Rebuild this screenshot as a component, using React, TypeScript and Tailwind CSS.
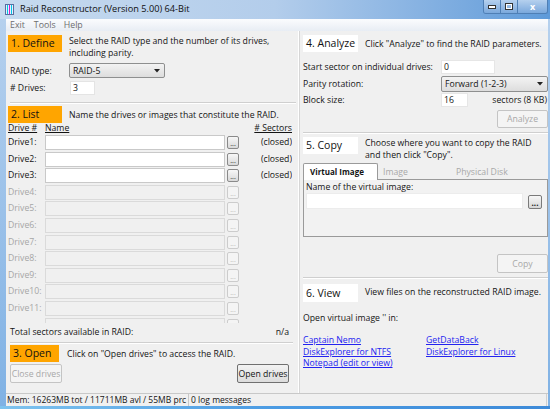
import React from "react";

const FONT = { fontFamily: '"Open Sans", "Noto Sans", "Liberation Sans", sans-serif' };

function DotBtn({ enabled, label = "..." }: { enabled: boolean; label?: string }) {
  return (
    <div
      className={
        enabled
          ? "w-[12px] h-[13px] shrink-0 rounded-[2px] border border-[#8a8a8a] bg-gradient-to-b from-[#f7f7f7] to-[#d9d9d9] flex items-end justify-center text-[7px] leading-[9px] text-[#222]"
          : "w-[12px] h-[13px] shrink-0 rounded-[2px] border border-[#cccccc] bg-[#f4f4f4] flex items-end justify-center text-[7px] leading-[9px] text-[#b4b4b4]"
      }
    >
      {label}
    </div>
  );
}

function Arrow() {
  return (
    <svg width="6" height="4" viewBox="0 0 6 4" className="ml-auto shrink-0">
      <path d="M0 0 L6 0 L3 3.5 Z" fill="#222" />
    </svg>
  );
}

function Sep({ className = "" }: { className?: string }) {
  return (
    <div className={"h-[2px] shrink-0 flex flex-col " + className}>
      <div className="h-[1px] bg-[#cfcfcf]" />
      <div className="h-[1px] bg-white" />
    </div>
  );
}

const drives = Array.from({ length: 12 }, (_, i) => i + 1);

export default function App() {
  return (
    <div
      className="w-[550px] h-[409px] overflow-hidden flex flex-col bg-gradient-to-b from-[#b8d2ee] to-[#7fb1e4] text-[#141414]"
      style={FONT}
    >
      {/* Title bar */}
      <div className="h-[19px] shrink-0 flex items-start bg-gradient-to-r from-[#c6daef] via-[#b3cdeb] to-[#5e9ad9]">
        <div className="mt-[4px] ml-[5px] w-[9px] h-[11px] border border-[#5a6fa0] bg-[#e8f0ff] flex gap-[1px] px-[1px]">
          <div className="w-[1px] bg-[#00c8e8]" />
          <div className="w-[2px] bg-[#d020c8]" />
          <div className="w-[1px] bg-[#00c8e8]" />
        </div>
        <span className="ml-[6px] mt-[3px] text-[9.2px] leading-[12px] text-[#101010] whitespace-nowrap">
          Raid Reconstructor (Version 5.00) 64-Bit
        </span>
        <div className="ml-auto mr-[2px] flex h-[14px] rounded-b-[3px] border border-t-0 border-[#4f7fb5] overflow-hidden">
          <div className="w-[17px] bg-gradient-to-b from-[#b5d0ee] to-[#7aa8dc] border-r border-[#4f7fb5] flex items-end justify-center pb-[4px]">
            <div className="w-[6px] h-[2px] bg-white border border-[#333] box-content" />
          </div>
          <div className="w-[17px] bg-gradient-to-b from-[#b5d0ee] to-[#7aa8dc] border-r border-[#4f7fb5] flex items-center justify-center">
            <div className="w-[6px] h-[5px] border-[1.5px] border-white outline outline-1 outline-[#333]" />
          </div>
          <div className="w-[29px] bg-gradient-to-b from-[#b5d0ee] to-[#7aa8dc] flex items-center justify-center text-white text-[9px] font-bold leading-[10px]">
            x
          </div>
        </div>
      </div>

      {/* Client */}
      <div className="flex-1 ml-[6px] mr-[2px] flex flex-col bg-[#f0f0f0] min-h-0">
        {/* Menu */}
        <div className="h-[12px] shrink-0 flex items-center bg-gradient-to-b from-[#fbfcfe] to-[#e8edf4] text-[8.8px] leading-[12px] text-[#6e6e6e]">
          <span className="ml-[4px]">Exit</span>
          <span className="ml-[9px]">Tools</span>
          <span className="ml-[8px]">Help</span>
        </div>

        {/* Content */}
        <div className="flex-1 flex min-h-0 text-[8.7px] leading-[12px]">
          {/* Left panel */}
          <div className="w-[292px] shrink-0 flex flex-col pl-[2px] pr-[6px]">
            <div className="flex mt-[4px] h-[26px] shrink-0">
              <div className="w-[54px] h-[17px] shrink-0 bg-[#ffa500] text-[10.5px] leading-[17px] pl-[3px] text-[#111]">1. Define</div>
              <div className="ml-[7px] leading-[12px] whitespace-nowrap">
                Select the RAID type and the number of its drives,
                <br />
                including parity.
              </div>
            </div>
            <div className="flex items-center mt-[2px] h-[15px] shrink-0">
              <span className="w-[61px] pl-[2px]">RAID type:</span>
              <div className="w-[96px] h-[15px] border border-[#8e8f8f] rounded-[2px] bg-gradient-to-b from-[#f3f3f3] to-[#dddddd] flex items-center pl-[3px] pr-[4px]">
                <span>RAID-5</span>
                <Arrow />
              </div>
            </div>
            <div className="flex items-center mt-[3px] h-[14px] shrink-0">
              <span className="w-[62px] pl-[2px]">#&nbsp;Drives:</span>
              <div className="w-[25px] h-[14px] bg-white border border-[#e4e4e4] pl-[2px] leading-[12px]">3</div>
            </div>
            <Sep className="mt-[7px] ml-[2px] mr-[-4px]" />
            <div className="flex items-center mt-[2px] h-[17px] shrink-0">
              <div className="w-[54px] h-[17px] shrink-0 bg-[#ffa500] text-[10.5px] leading-[17px] pl-[3px] text-[#111]">2. List</div>
              <div className="ml-[7px] whitespace-nowrap">Name the drives or images that constitute the RAID.</div>
            </div>
            <div className="flex h-[11px] leading-[11px] shrink-0">
              <span className="w-[37px] underline">Drive #</span>
              <span className="underline">Name</span>
              <span className="ml-auto underline">#&nbsp;Sectors</span>
            </div>
            <div className="mt-[1px] h-[188px] overflow-hidden shrink-0">
              {drives.map((d) => {
                const en = d <= 3;
                return (
                  <div key={d} className="flex items-start h-[16.6px]">
                    <span className={en ? "w-[37px] leading-[15px] text-[#141414]" : "w-[37px] leading-[15px] text-[#a6a6a6]"}>
                      {d < 12 ? `Drive${d}:` : ""}
                    </span>
                    <div className={en ? "w-[180px] h-[15px] bg-white border border-[#c9c9c9]" : "w-[180px] h-[15px] bg-[#f0f0f0] border border-[#dadada]"} />
                    <div className="ml-[2px] mt-[1px]">
                      <DotBtn enabled={en} label={d < 12 ? "..." : ""} />
                    </div>
                    <span className="ml-auto leading-[15px]">{en ? "(closed)" : ""}</span>
                  </div>
                );
              })}
            </div>
            <div className="flex items-center mt-[3px] h-[12px] shrink-0 pl-[2px] pr-[3px]">
              <span>Total sectors available in RAID:</span>
              <span className="ml-auto">n/a</span>
            </div>
            <Sep className="mt-[4px] ml-[2px] mr-[-1px]" />
            <div className="flex items-center mt-[1px] h-[17px] shrink-0 pl-[2px]">
              <div className="w-[49px] h-[17px] shrink-0 bg-[#ffa500] text-[10.5px] leading-[17px] pl-[3px] text-[#111]">3. Open</div>
              <div className="ml-[8px] whitespace-nowrap">Click on "Open drives" to access the RAID.</div>
            </div>
            <div className="flex mt-[2px] h-[19px] shrink-0 pl-[2px] pr-[3px]">
              <div className="w-[52px] h-[19px] border border-[#c4c4c4] rounded-[2px] bg-[#f4f4f4] text-[#a8a8a8] flex items-center justify-center whitespace-nowrap">Close drives</div>
              <div className="ml-auto w-[52px] h-[19px] border border-[#707070] rounded-[2px] bg-gradient-to-b from-[#f3f3f3] to-[#dcdcdc] flex items-center justify-center whitespace-nowrap">Open drives</div>
            </div>
          </div>

          {/* Splitter */}
          <div className="w-[2px] shrink-0 flex">
            <div className="w-[1px] bg-white" />
            <div className="w-[1px] bg-[#d6d6d6]" />
          </div>

          {/* Right panel */}
          <div className="flex-1 flex flex-col pl-[3px] min-w-0">
            <div className="flex items-center mt-[4px] h-[17px] shrink-0">
              <div className="w-[55px] h-[17px] shrink-0 bg-white text-[10.5px] leading-[17px] pl-[3px] text-[#111]">4. Analyze</div>
              <div className="ml-[7px] whitespace-nowrap">Click "Analyze" to find the RAID parameters.</div>
            </div>
            <div className="flex items-center mt-[8px] h-[14px] shrink-0">
              <span className="w-[138px] whitespace-nowrap">Start sector on individual drives:</span>
              <div className="w-[54px] h-[14px] bg-white border border-[#e6e6e6] pl-[2px] leading-[12px]">0</div>
            </div>
            <div className="flex items-center mt-[2px] h-[16px] shrink-0">
              <span className="w-[138px]">Parity rotation:</span>
              <div className="w-[107px] h-[16px] border border-[#8e8f8f] rounded-[2px] bg-gradient-to-b from-[#f3f3f3] to-[#dddddd] flex items-center pl-[3px] pr-[4px]">
                <span>Forward (1-2-3)</span>
                <Arrow />
              </div>
            </div>
            <div className="flex items-center mt-[1px] h-[14px] shrink-0">
              <span className="w-[138px]">Block size:</span>
              <div className="w-[27px] h-[14px] bg-white border border-[#e6e6e6] pl-[2px] leading-[12px]">16</div>
              <span className="ml-auto mr-[1px] whitespace-nowrap">sectors (8 KB)</span>
            </div>
            <div className="flex justify-end mt-[3px] h-[18px] shrink-0">
              <div className="w-[51px] h-[18px] border border-[#c4c4c4] rounded-[2px] bg-[#f4f4f4] text-[#a8a8a8] flex items-center justify-center">Analyze</div>
            </div>
            <Sep className="mt-[4px]" />
            <div className="flex mt-[3px] h-[26px] shrink-0">
              <div className="w-[55px] h-[17px] shrink-0 bg-white text-[10.5px] leading-[17px] pl-[3px] text-[#111]">5. Copy</div>
              <div className="ml-[7px] leading-[12px] whitespace-nowrap">
                Choose where you want to copy the RAID
                <br />
                and then click "Copy".
              </div>
            </div>
            <div className="flex h-[17px] shrink-0 items-end relative z-10">
              <div className="w-[75px] h-[17px] bg-white border border-b-0 border-[#9a9a9a] rounded-t-[2px] font-bold text-[8px] leading-[16px] pl-[6px] whitespace-nowrap">Virtual Image</div>
              <span className="ml-[5px] h-[16px] leading-[16px] text-[#a8a8a8]">Image</span>
              <span className="ml-[48px] h-[16px] leading-[16px] text-[#a8a8a8]">Physical Disk</span>
            </div>
            <div className="mt-[-1px] h-[58px] shrink-0 border border-[#9a9a9a] bg-[#f2f2f2] pl-[2px] pt-[2px] flex flex-col">
              <div className="h-[11px] leading-[11px]">Name of the virtual image:</div>
              <div className="flex items-start">
                <div className="w-[217px] h-[16px] bg-white border border-[#ececec]" />
                <div className="ml-[5px] mt-[2px] w-[14px] h-[14px] rounded-[2px] border border-[#7a7a7a] bg-gradient-to-b from-[#f7f7f7] to-[#d6d6d6] flex items-end justify-center text-[8px] leading-[10px] font-bold">...</div>
              </div>
            </div>
            <div className="flex justify-end mt-[17px] h-[19px] shrink-0">
              <div className="w-[51px] h-[19px] border border-[#c4c4c4] rounded-[2px] bg-[#f4f4f4] text-[#a8a8a8] flex items-center justify-center">Copy</div>
            </div>
            <Sep className="mt-[4px]" />
            <div className="flex items-center mt-[5px] h-[18px] shrink-0">
              <div className="w-[55px] h-[18px] shrink-0 bg-white text-[10.5px] leading-[18px] pl-[3px] text-[#111]">6. View</div>
              <div className="ml-[7px] mt-[-2px] whitespace-nowrap">View files on the reconstructed RAID image.</div>
            </div>
            <div className="mt-[10px] h-[12px] shrink-0">Open virtual image '' in:</div>
            <div className="mt-[11px] grid grid-cols-[123px_1fr] auto-rows-[11.5px] leading-[11.5px] text-[#2323f0]">
              <span className="underline whitespace-nowrap">Captain Nemo</span>
              <span className="underline whitespace-nowrap">GetDataBack</span>
              <span className="underline whitespace-nowrap">DiskExplorer for NTFS</span>
              <span className="underline whitespace-nowrap">DiskExplorer for Linux</span>
              <span className="underline whitespace-nowrap">Notepad (edit or view)</span>
            </div>
          </div>
        </div>

        {/* Status bar */}
        <div className="h-[13px] shrink-0 border-t border-[#c8c8c8] flex items-center text-[8.5px] leading-[12px] bg-[#f0f0f0]">
          <span className="ml-[1px] w-[181px] whitespace-nowrap">Mem: 16263MB tot / 11711MB avl / 55MB prc</span>
          <div className="w-[1px] h-[12px] bg-[#c8c8c8]" />
          <span className="ml-[2px]">0 log messages</span>
          <div className="ml-auto mr-[1px] w-[1px] h-[12px] bg-[#d0d0d0]" />
        </div>
      </div>

      {/* Bottom frame */}
      <div className="h-[3px] shrink-0 bg-gradient-to-r from-[#7fc3ee] via-[#4b9be3] to-[#3d8ad8]" />
    </div>
  );
}
